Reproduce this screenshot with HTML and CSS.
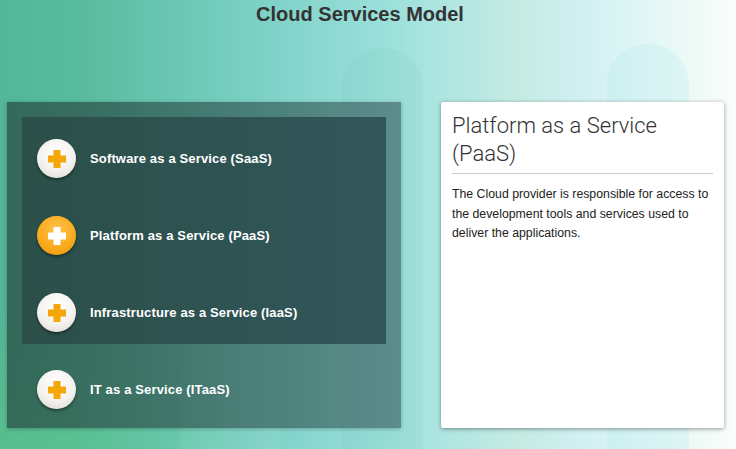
FILE: index.html
```html
<!DOCTYPE html>
<html lang="en">
<head>
    <meta charset="UTF-8">
    <meta name="viewport" content="width=device-width, initial-scale=1.0">
    <title>Cloud Services Model</title>
    <link rel="stylesheet" href="styles.css">
</head>
<body>
    <div class="backdrop">
        <div class="pillar pillar-one"></div>
        <div class="pillar pillar-two"></div>
        <div class="pillar pillar-three"></div>
    </div>

    <h1 class="title">Cloud Services Model</h1>

    <div class="stage">
        <div class="menu">
            <div class="menu-group">
                <div class="menu-item">
                    <span class="plus"></span>
                    <span class="label">Software as a Service (SaaS)</span>
                </div>
                <div class="menu-item active">
                    <span class="plus"></span>
                    <span class="label">Platform as a Service (PaaS)</span>
                </div>
                <div class="menu-item">
                    <span class="plus"></span>
                    <span class="label">Infrastructure as a Service (IaaS)</span>
                </div>
            </div>
            <div class="menu-item outside">
                <span class="plus"></span>
                <span class="label">IT as a Service (ITaaS)</span>
            </div>
        </div>

        <div class="card">
            <h2>Platform as a Service (PaaS)</h2>
            <p>The Cloud provider is responsible for access to the development tools and services used to deliver the applications.</p>
        </div>
    </div>
</body>
</html>
```

FILE: styles.css
```css
body {
    margin: 0;
    width: 736px;
    height: 449px;
    overflow: hidden;
    position: relative;
    font-family: "Liberation Sans", Arial, sans-serif;
    background: linear-gradient(to right, #52b697 0%, #5abc9f 12%, #6cc8b6 25%, #84d5cc 40%, #9adfda 52%, #b3e6e2 62%, #c3ebe2 70%, #d2f1f3 80%, #e6f7f6 90%, #fafdf9 100%);
}
.backdrop {
    position: absolute;
    inset: 0;
    background: radial-gradient(ellipse 240px 140px at 20px 449px, rgba(90, 200, 130, 0.5), rgba(90, 200, 130, 0));
}
.pillar {
    position: absolute;
    bottom: 0;
    border-radius: 40px 40px 0 0;
    background: rgba(255, 255, 255, 0.06);
}
.pillar-one {
    left: 341px;
    width: 82px;
    top: 48px;
    background: rgba(60, 150, 140, 0.05);
}
.pillar-two {
    left: 607px;
    width: 82px;
    top: 44px;
    background: rgba(170, 230, 235, 0.22);
}
.pillar-three {
    left: 180px;
    width: 100px;
    top: 330px;
    border-radius: 50px 50px 0 0;
}
.title {
    position: relative;
    margin: 0;
    padding: 3px 16px 0 0;
    height: 25px;
    text-align: center;
    font-size: 20px;
    font-weight: bold;
    color: #333;
}
.stage {
    position: relative;
    display: flex;
    gap: 40px;
    padding: 74px 0 0 7px;
}
.menu {
    width: 394px;
    height: 326px;
    box-sizing: border-box;
    padding: 15px;
    background: linear-gradient(to right, rgba(42, 82, 72, 0.78), rgba(62, 100, 100, 0.66));
    box-shadow: 0 1px 4px rgba(0, 0, 0, 0.25);
}
.menu-group {
    height: 227px;
    box-sizing: border-box;
    padding-top: 3px;
    background: linear-gradient(to right, #2b5049, #32565a);
}
.menu-item {
    display: flex;
    align-items: center;
    height: 77px;
    padding-left: 15px;
    gap: 14px;
}
.menu-item.outside {
    margin-top: 7px;
}
.label {
    color: #fff;
    font-size: 13px;
    letter-spacing: 0.15px;
    font-weight: bold;
}
.plus {
    position: relative;
    width: 39px;
    height: 39px;
    border-radius: 50%;
    flex-shrink: 0;
    background: radial-gradient(circle at 50% 35%, #ffffff 0%, #f4f2ee 55%, #d9d4cc 100%);
    box-shadow: 0 2px 3px rgba(0, 0, 0, 0.4);
}
.plus::before,
.plus::after {
    content: "";
    position: absolute;
    left: 50%;
    top: 50%;
    background: #f5a70a;
    transform: translate(-50%, -50%);
}
.plus::before {
    width: 18px;
    height: 7px;
}
.plus::after {
    width: 7px;
    height: 18px;
}
.active .plus {
    background: radial-gradient(circle at 50% 35%, #ffc24a 0%, #fbab1e 55%, #ec9508 100%);
}
.active .plus::before,
.active .plus::after {
    background: #fff;
}
.card {
    width: 283px;
    height: 326px;
    box-sizing: border-box;
    padding: 10px 11px;
    background: #fff;
    border-radius: 2px;
    box-shadow: 0 1px 4px rgba(0, 0, 0, 0.4);
}
.card h2 {
    margin: 0;
    padding-bottom: 5px;
    border-bottom: 1px solid #ccc;
    font-family: Roboto, "Liberation Sans", sans-serif;
    font-weight: 300;
    font-size: 22px;
    line-height: 28px;
    color: #333;
}
.card p {
    margin: 11px 0 0;
    font-size: 12.3px;
    line-height: 19.5px;
    color: #222;
}
```
